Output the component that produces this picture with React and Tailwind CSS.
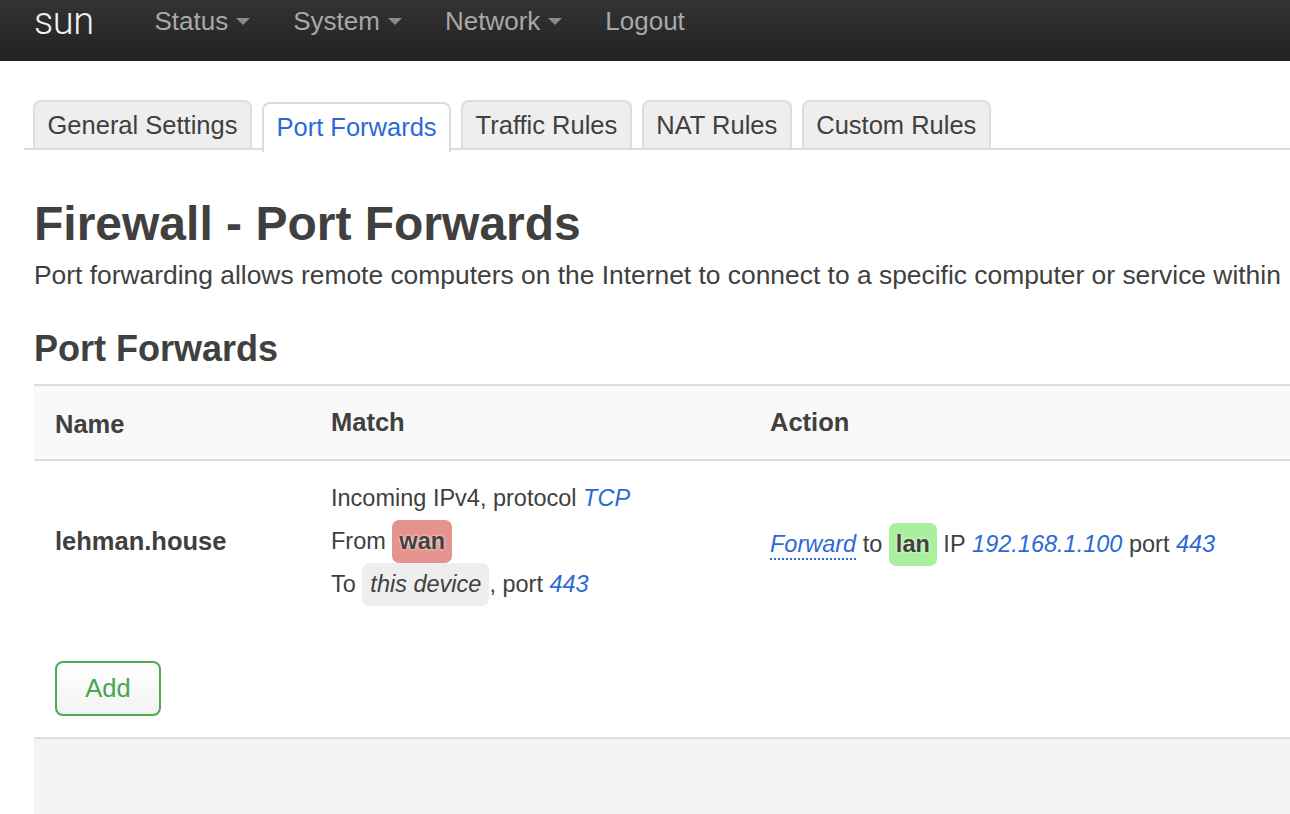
const navItems = ['Status', 'System', 'Network'];
const tabs = ['General Settings', 'Port Forwards', 'Traffic Rules', 'NAT Rules', 'Custom Rules'];

function Caret() {
  return (
    <svg width="14" height="8" viewBox="0 0 14 8" className="ml-[8px] mt-[2px]">
      <path d="M0 0 L14 0 L7 7 Z" fill="#8a8a8a" />
    </svg>
  );
}

function Badge({ color, children, italic }) {
  return (
    <span
      className={`inline-flex items-center h-[43px] rounded-[7px] ${color} ${
        italic ? 'italic font-normal px-[8px]' : 'font-bold px-[7px] [text-shadow:0_0_3px_#fff]'
      }`}
    >
      {children}
    </span>
  );
}

export default function App() {
  return (
    <div className="min-h-[814px] w-[1290px] overflow-hidden bg-white text-[#404040] font-['Liberation_Sans',Arial,sans-serif]">
      {/* barre du haut */}
      <header className="h-[61px] bg-linear-to-b from-[#333] to-[#222] flex items-start pt-[2px]">
        <span className="ml-[34px] text-[38px] leading-[38px] text-[#f2f2f2] font-light tracking-[-0.5px] font-['Roboto','Liberation_Sans',sans-serif]">
          sun
        </span>
        <nav className="flex items-center ml-[61px] mt-[2px] text-[26px] leading-[34px] text-[#a8a8a8]">
          {navItems.map((item) => (
            <span key={item} className="flex items-center mr-[43px]">
              {item}
              <Caret />
            </span>
          ))}
          <span>Logout</span>
        </nav>
      </header>

      <main className="pl-[24px]">
        {/* onglets */}
        <ul className="mt-[39px] flex gap-[10px] pl-[9px] border-b-2 border-[#ddd] h-[50px]">
          {tabs.map((tab) => {
            const active = tab === 'Port Forwards';
            return (
              <li
                key={tab}
                className={`px-[12.5px] flex items-center border-2 border-b-0 rounded-t-[8px] text-[25.5px] ${
                  active
                    ? 'bg-white border-[#ddd] text-[#2b6ad6] relative top-[2px] h-[50px]'
                    : 'bg-[#eee] border-[#ddd] text-[#404040] h-[48px]'
                }`}
              >
                <span className={active ? '-mt-[2px]' : ''}>{tab}</span>
              </li>
            );
          })}
        </ul>

        <div className="pl-[10px]">
          <h2 className="mt-[47px] text-[48px] leading-[53px] font-bold text-[#404040]">
            Firewall - Port Forwards
          </h2>
          <p className="mt-[8px] text-[26.4px] leading-[34px] whitespace-nowrap">
            Port forwarding allows remote computers on the Internet to connect to a specific computer or service within
          </p>

          <h3 className="mt-[37px] text-[36px] leading-[40px] font-bold">Port Forwards</h3>

          {/* tableau */}
          <div className="mt-[15px] w-[1300px] border-t-2 border-[#ddd]">
            <div className="grid grid-cols-[276px_439px_1fr] h-[75px] bg-[#f9f9f9] border-b-2 border-[#ddd] font-bold text-[25.5px]">
              <div className="pl-[21px] flex items-center pt-[3px]">Name</div>
              <div className="pl-[21px] flex items-center">Match</div>
              <div className="pl-[21px] flex items-center">Action</div>
            </div>

            <div className="grid grid-cols-[276px_439px_1fr] text-[23.5px] py-[16px]">
              <div className="pl-[21px] flex items-center font-bold text-[25.5px]">lehman.house</div>
              <div className="pl-[21px] flex flex-col">
                <div className="h-[43px] flex items-center">
                  Incoming IPv4, protocol&nbsp;<i className="text-[#2b6ad6]">TCP</i>
                </div>
                <div className="h-[43px] flex items-center">
                  From&nbsp;
                  <Badge color="bg-[#e5938f]">wan</Badge>
                </div>
                <div className="h-[43px] flex items-center">
                  To&nbsp;
                  <Badge color="bg-[#eee]" italic>
                    this device
                  </Badge>
                  , port&nbsp;<i className="text-[#2b6ad6]">443</i>
                </div>
              </div>
              <div className="pl-[21px] flex items-center pt-[6px]">
                <i className="text-[#2b6ad6] border-b-2 border-dotted border-[#2b6ad6] leading-[28px]">Forward</i>
                &nbsp;to&nbsp;
                <Badge color="bg-[#a8f09e]">lan</Badge>
                &nbsp;IP&nbsp;<i className="text-[#2b6ad6]">192.168.1.100</i>&nbsp;port&nbsp;
                <i className="text-[#2b6ad6]">443</i>
              </div>
            </div>
          </div>

          <div className="pt-[39px] pl-[21px] pb-[21px]">
            <button className="w-[106px] h-[55px] rounded-[8px] border-2 border-[#4eab55] text-[#45a64c] text-[25.5px] bg-linear-to-b from-white to-[#f3f3f3]">
              Add
            </button>
          </div>

          <div className="w-[1300px] h-[80px] bg-[#f4f4f4] border-t-2 border-[#ddd]" />
        </div>
      </main>
    </div>
  );
}
